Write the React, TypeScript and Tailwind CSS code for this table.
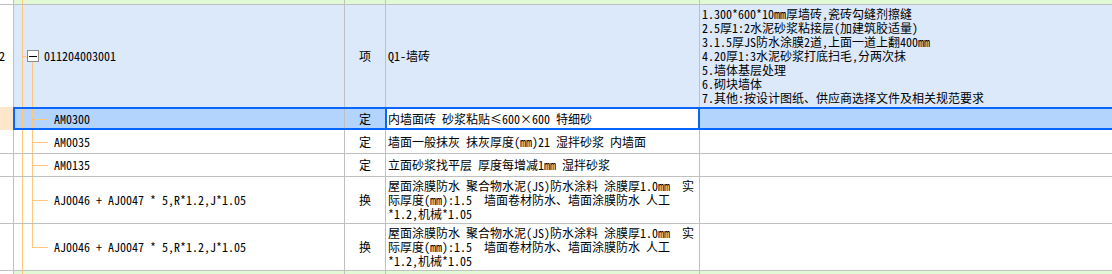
import React from 'react'

type Tree = 'parent' | 'child' | 'last' | 'none'

interface Row {
  h: string
  num?: string
  code?: string
  tree: Tree
  type?: string
  name?: string[]
  desc?: string[]
  tone: 'strip' | 'item' | 'plain' | 'selected'
}

const rows: Row[] = [
  { h: 'h-[5px] border-b', tree: 'none', tone: 'strip' },
  {
    h: 'h-[102px]',
    num: '2',
    code: '011204003001',
    tree: 'parent',
    type: '项',
    name: ['Q1-墙砖'],
    desc: [
      '1.300*600*10mm厚墙砖,瓷砖勾缝剂擦缝',
      '2.5厚1:2水泥砂浆粘接层(加建筑胶适量)',
      '3.1.5厚JS防水涂膜2道,上面一道上翻400mm',
      '4.20厚1:3水泥砂浆打底扫毛,分两次抹',
      '5.墙体基层处理',
      '6.砌块墙体',
      '7.其他:按设计图纸、供应商选择文件及相关规范要求',
    ],
    tone: 'item',
  },
  { h: 'h-[23px]', code: 'AM0300', tree: 'child', type: '定', name: ['内墙面砖 砂浆粘贴≤600×600 特细砂'], tone: 'selected' },
  { h: 'h-[24px] border-b', code: 'AM0035', tree: 'child', type: '定', name: ['墙面一般抹灰 抹灰厚度(mm)21 湿拌砂浆 内墙面'], tone: 'plain' },
  { h: 'h-[23px] border-b', code: 'AM0135', tree: 'child', type: '定', name: ['立面砂浆找平层 厚度每增减1mm 湿拌砂浆'], tone: 'plain' },
  {
    h: 'h-[47px] border-b',
    code: 'AJ0046 + AJ0047 * 5,R*1.2,J*1.05',
    tree: 'child',
    type: '换',
    name: ['屋面涂膜防水 聚合物水泥(JS)防水涂料 涂膜厚1.0mm  实', '际厚度(mm):1.5  墙面卷材防水、墙面涂膜防水 人工', '*1.2,机械*1.05'],
    tone: 'plain',
  },
  {
    h: 'h-[47px] border-b',
    code: 'AJ0046 + AJ0047 * 5,R*1.2,J*1.05',
    tree: 'last',
    type: '换',
    name: ['屋面涂膜防水 聚合物水泥(JS)防水涂料 涂膜厚1.0mm  实', '际厚度(mm):1.5  墙面卷材防水、墙面涂膜防水 人工', '*1.2,机械*1.05'],
    tone: 'plain',
  },
]

const bgFor = (tone: Row['tone']) =>
  tone === 'strip' ? 'bg-[#e1f9d5]' : tone === 'item' ? 'bg-[#dce9fb]' : tone === 'selected' ? 'bg-[#b3d4fc]' : 'bg-white'

function TreeLines({ tree }: { tree: Tree }) {
  return (
    <>
      {/* outer trunk */}
      <div className="absolute left-[8px] top-0 bottom-0 w-px bg-[#ffc67c]" />
      {tree === 'parent' && (
        <>
          <div className="absolute left-[9px] top-1/2 w-[4px] h-px bg-[#ffc67c]" />
          <div className="absolute left-[18px] top-[calc(50%+6px)] bottom-0 w-px bg-[#ffc67c]" />
          <div className="absolute left-[13px] top-[calc(50%-6px)] w-[12px] h-[12px] border border-[#8a8a8a] bg-white flex items-center justify-center">
            <div className="w-[8px] h-px bg-black" />
          </div>
        </>
      )}
      {(tree === 'child' || tree === 'last') && (
        <>
          <div className={`absolute left-[18px] top-0 w-px bg-[#ffc67c] ${tree === 'last' ? 'h-1/2' : 'bottom-0'}`} />
          <div className="absolute left-[18px] top-1/2 w-[16px] h-px bg-[#ffc67c]" />
        </>
      )}
    </>
  )
}

function GridRow({ row }: { row: Row }) {
  const bg = bgFor(row.tone)
  const sel = row.tone === 'selected'
  return (
    <div className={`relative flex ${row.h} border-[#c0c0c0] box-border`}>
      <div className={`w-[14px] shrink-0 border-r border-[#c0c0c0] flex items-center justify-end pr-[8px] overflow-hidden ${sel ? 'bg-[#fde6c9]' : 'bg-white'}`}>
        {row.num}
      </div>
      <div className={`relative w-[331px] shrink-0 border-r border-[#c0c0c0] flex items-center ${bg} ${row.tree === 'parent' ? 'pl-[30px]' : 'pl-[40px]'}`}>
        <TreeLines tree={row.tree} />
        <span className="whitespace-pre">{row.code}</span>
      </div>
      {sel ? (
        <>
          <div className={`w-[40px] shrink-0 flex items-center justify-center ${bg}`}>{row.type}</div>
          <div className="w-[315px] shrink-0 border-2 border-[#0a66fa] bg-white flex items-center pl-[1px] whitespace-pre">
            {row.name?.[0]}
          </div>
          <div className={`flex-1 ${bg}`} />
          <div className="absolute left-[13px] -right-[4px] top-0 bottom-0 border-2 border-[#0a66fa] pointer-events-none" />
        </>
      ) : (
        <>
          <div className={`w-[41px] shrink-0 border-r border-[#c0c0c0] flex items-center justify-center ${bg}`}>{row.type}</div>
          <div className={`w-[314px] shrink-0 border-r border-[#c0c0c0] flex flex-col justify-center pl-[2px] ${bg}`}>
            {row.name?.map((l, i) => (
              <div key={i} className="whitespace-pre leading-[14px]">{l}</div>
            ))}
          </div>
          <div className={`flex-1 flex flex-col justify-center pl-[2px] ${bg}`}>
            {row.desc?.map((l, i) => (
              <div key={i} className="whitespace-pre leading-[14px]">{l}</div>
            ))}
          </div>
        </>
      )}
    </div>
  )
}

export default function App() {
  return (
    <div className="w-[1112px] h-[274px] overflow-hidden bg-white text-[12px] text-black font-['Noto_Sans_Mono_CJK_SC','Noto_Sans_CJK_SC',monospace]">
      {rows.map((r, i) => (
        <GridRow key={i} row={r} />
      ))}
      {/* next item, cut off at the bottom edge */}
      <div className="flex h-[20px]">
        <div className="w-[14px] shrink-0 border-r border-[#c0c0c0] bg-white" />
        <div className="relative w-[331px] shrink-0 border-r border-[#c0c0c0] bg-[#e1f9d5]">
          <div className="absolute left-[8px] top-0 bottom-0 w-px bg-[#ffc67c]" />
        </div>
        <div className="w-[41px] shrink-0 border-r border-[#c0c0c0] bg-[#e1f9d5]" />
        <div className="w-[314px] shrink-0 border-r border-[#c0c0c0] bg-[#e1f9d5]" />
        <div className="flex-1 bg-[#e1f9d5] pl-[15px] leading-[14px] pt-[2px] whitespace-pre">墙体基层处理 砌块墙体</div>
      </div>
    </div>
  )
}
